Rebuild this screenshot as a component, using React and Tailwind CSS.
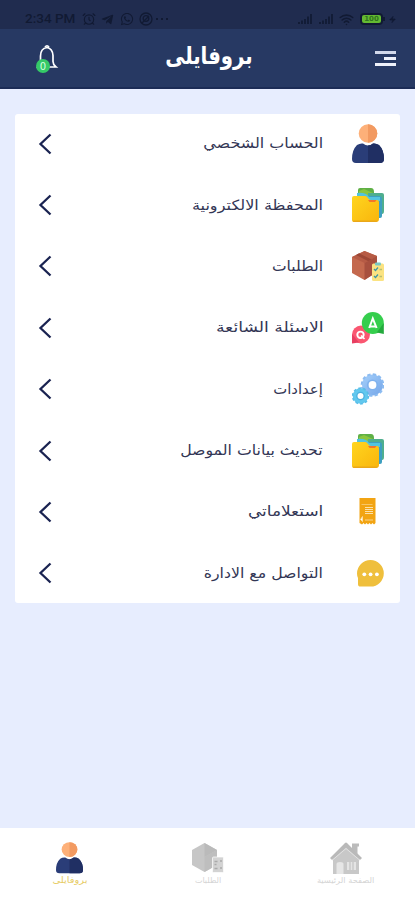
import React from "react";
import { AlarmClock, Wifi, Zap } from "lucide-react";
import { FaTelegramPlane, FaWhatsapp } from "react-icons/fa";

const UserIcon = ({ className }) => (
  <svg viewBox="0 0 32 40" preserveAspectRatio="none" className={className}>
    <path d="M5 21q3-2 6-1.500q5 4 10 0q3-.5 6 1.500q5 5 5 14q0 4-4 4H4q-4 0-4-4q0-9 5-14z" fill="#2a3d78" />
    <path d="M16 21.500q3 0 5-2q3-.5 6 1.500q5 5 5 14q0 4-4 4H16z" fill="#202f63" />
    <circle cx="16" cy="9.500" r="9.300" fill="#fdb079" />
    <path d="M16 .2a9.300 9.300 0 0 1 0 18.600z" fill="#f29a61" />
  </svg>
);

const FoldersIcon = ({ className }) => (
  <svg viewBox="0 0 32 34" className={className}>
    <defs>
      <linearGradient id="folder" x1="0" y1="0" x2="1" y2="1">
        <stop offset="0" stopColor="#ffd51f" />
        <stop offset="1" stopColor="#f9b50c" />
      </linearGradient>
    </defs>
    <path d="M6 2q0-2 2-2h11q3 0 3 4v8H6z" fill="#5fb046" />
    <path d="M7 3l5-2 9 4v4H7z" fill="#8bc63f" />
    <path d="M16 5h14q2 0 2 2v16q0 3-2 3H16z" fill="#4fae8e" />
    <path d="M14 8h13q3 0 3 3v17q0 2-2 2H14z" fill="#3d9fc0" />
    <path d="M5 5q9-1 12 4h11v4H5z" fill="#52c4df" />
    <path d="M0 10q0-2 2-2h11q2 0 3 2 1 2 3 2h6q2 0 2 2v17q0 3-3 3H2q-2 0-2-2z" fill="url(#folder)" />
    <path d="M16 12h8.500l-1.500 2h-5.500z" fill="#f2762a" />
    <path d="M.5 32.500h25.500q-1 1.500-3 1.500H2q-1 0-1.500-1.500z" fill="#eaa719" />
  </svg>
);

const BoxIcon = ({ className }) => (
  <svg viewBox="0 0 32 30" className={className}>
    <path d="M12.500 0L25 5v16L12.500 29 0 22V6z" fill="#c4694e" />
    <path d="M12.500 0L25 5 12.500 12 0 6z" fill="#b65b45" />
    <path d="M7 2.300l12 6v3.500l-3 1V10L4 4z" fill="#9c4736" />
    <path d="M12.500 12L25 5v16l-12.500 8z" fill="#a8503e" />
    <rect x="20" y="12.500" width="12" height="17.500" rx="1.500" fill="#fbe382" />
    <rect x="23" y="11.500" width="6" height="3" rx="1" fill="#79c9c4" />
    <path d="M22 18l1.500 1.500 2.500-3M22 25l1.500 1.500 2.500-3" fill="none" stroke="#3f97a5" strokeWidth="1.300" />
    <path d="M27.500 18.500h2.500M27.500 25.500h2.500" stroke="#b9bf70" strokeWidth="1.300" />
  </svg>
);

const FaqIcon = ({ className }) => (
  <svg viewBox="0 0 32 32" className={className}>
    <circle cx="9" cy="22.500" r="9" fill="#fa5771" />
    <path d="M0 22v9.500l7-1z" fill="#e83e61" />
    <circle cx="8.500" cy="22.800" r="3.200" fill="none" stroke="#fff" strokeWidth="1.900" />
    <path d="M9 23.500l3.500 3.500" stroke="#fff" strokeWidth="1.700" />
    <circle cx="20.800" cy="11" r="11" fill="#35ce4d" />
    <path d="M31.800 11v11l-7-1.500z" fill="#24aa3d" />
    <path d="M17.200 16L20.800 6.500 24.600 16M18 14.500h6" fill="none" stroke="#fff" strokeWidth="2" />
  </svg>
);

const GearsIcon = ({ className }) => (
  <svg viewBox="0 0 32 32" className={className}>
    <defs>
      <linearGradient id="gear" x1="0" y1="0" x2="1" y2="1">
        <stop offset="0" stopColor="#a5d0fb" />
        <stop offset="1" stopColor="#74a5e8" />
      </linearGradient>
    </defs>
    <circle cx="20.500" cy="12" r="10.500" fill="url(#gear)" />
    <circle cx="20.500" cy="12" r="10.800" fill="none" stroke="#8bbbf1" strokeWidth="2" strokeDasharray="3.400 2.250" />
    <circle cx="20.500" cy="12" r="5.600" fill="#7fb2ee" />
    <circle cx="20.500" cy="12" r="3.900" fill="#fff" />
    <circle cx="8.500" cy="23" r="7.800" fill="#62c8ee" />
    <circle cx="8.500" cy="23" r="7.900" fill="none" stroke="#58bde8" strokeWidth="1.600" strokeDasharray="2.700 2.260" />
    <circle cx="8.500" cy="23" r="4.300" fill="#4bb0e0" />
    <circle cx="8.500" cy="23" r="3" fill="#fff" />
  </svg>
);

const ReceiptIcon = ({ className }) => (
  <svg viewBox="0 0 17 27" className={className}>
    <path d="M.5 0h16v25l-1.500 1.500-1.500-1.500-1.500 1.500-1.500-1.500L9 26.500 7.500 25 6 26.500 4.500 25 3 26.500.5 25z" fill="#f2a413" />
    <path d="M2.500 6.500h11" stroke="#f9cf7d" strokeWidth=".8" />
    <path d="M6 9.500h8M6 11.500h8M6 13.500h8M6 15.500h8" stroke="#fbe1ae" strokeWidth="1" />
    <path d="M1.500 21.500l2-3v5zM6 22h8" fill="#fff" stroke="#fbe1ae" strokeWidth=".8" />
  </svg>
);

const ChatIcon = ({ className }) => (
  <svg viewBox="0 0 27 27" className={className}>
    <path d="M13.500 0a13.300 13.300 0 1 1 0 26.600H3.500Q1 26.600 1 24V18Q0 16 0 13.500A13.500 13.500 0 0 1 13.500 0z" fill="#efbf3c" />
    <circle cx="7.300" cy="14.300" r="1.900" fill="#fff" />
    <circle cx="13.600" cy="14.300" r="1.900" fill="#fff" />
    <circle cx="19.900" cy="14.300" r="1.900" fill="#fff" />
  </svg>
);

const HomeIcon = ({ className }) => (
  <svg viewBox="0 0 32 32" className={className}>
    <path d="M22 1.500h7v3h-1.500V12L22 7z" fill="#bbb" />
    <path d="M3 15L16 4l13 11v17H3z" fill="#c8c8c8" />
    <path d="M0 16L15 1q1-1 2 0l15 15-2 2L16 5.500 2 18z" fill="#b9b9b9" />
    <path d="M2.500 18L16 6.500 29.500 18" fill="none" stroke="#e2e2e2" />
    <path d="M6.500 32V22q0-2 3.500-2t3.500 2v10z" fill="#e6e6e6" />
    <rect x="17" y="20" width="9" height="8" fill="#e4e4e4" />
    <path d="M20 20v8M23 20v8" stroke="#bcbcbc" />
  </svg>
);

const OrdersIcon = ({ className }) => (
  <svg viewBox="0 0 32 30" className={className}>
    <path d="M12.500 0L25 7v15l-12.500 7L0 22V7z" fill="#c6c6c6" />
    <path d="M12.500 0L25 7l-12.500 7z" fill="#bababa" />
    <path d="M12.500 14L25 7v15l-12.500 7z" fill="#bebebe" />
    <rect x="20.500" y="14" width="11" height="15.500" rx="1" fill="#d3d3d3" stroke="#fff" strokeWidth=".7" />
    <path d="M22.500 18.500h3M22.500 21.500h2M22.500 25.500h3M28 18h2M28 25h2" stroke="#aaa" strokeWidth="1.300" />
  </svg>
);

const Signal = () => (
  <svg viewBox="0 0 14 10" className="h-[10px] w-[14px]">
    <path d="M1 10V8M4 10V6.500M7 10V5M10 10V2.500M13 10V0" stroke="#111a33" strokeWidth="1.700" />
  </svg>
);

const menuItems = [
  { label: "الحساب الشخصي", icon: UserIcon, size: "h-10 w-8", stretch: "scale-x-[1.14]" },
  { label: "المحفظة الالكترونية", icon: FoldersIcon, size: "h-[34px] w-8", stretch: "scale-x-[1.15]" },
  { label: "الطلبات", icon: BoxIcon, size: "h-[30px] w-8", stretch: "scale-x-[1.11]" },
  { label: "الاسئلة الشائعة", icon: FaqIcon, size: "h-8 w-8", stretch: "scale-x-[1.23]" },
  { label: "إعدادات", icon: GearsIcon, size: "h-8 w-8", stretch: "scale-x-[1.06]" },
  { label: "تحديث بيانات الموصل", icon: FoldersIcon, size: "h-[34px] w-8", stretch: "scale-x-[1.125]" },
  { label: "استعلاماتي", icon: ReceiptIcon, size: "h-[27px] w-[17px] mr-2", stretch: "scale-x-[1.21]" },
  { label: "التواصل مع الادارة", icon: ChatIcon, size: "h-[27px] w-[27px]", stretch: "scale-x-[1.125]" },
];

const StatusBar = () => (
  <div dir="ltr" className="flex h-[29px] items-center justify-between bg-[#202c4f] pt-[9px] pr-[19px] pl-[25px] text-[#111a33]">
    <div className="flex items-center">
      <span className="w-[51px] whitespace-nowrap font-[Roboto] text-[13.5px] leading-none font-medium">2:34 PM</span>
      <AlarmClock className="ml-[6px] h-[14px] w-[14px]" />
      <FaTelegramPlane className="ml-[5px] h-[13px] w-[13px]" />
      <FaWhatsapp className="ml-[6px] h-[14px] w-[14px]" />
      <svg viewBox="0 0 14 14" className="ml-[5px] h-[14px] w-[14px]" fill="none" stroke="#111a33" strokeWidth="1.300">
        <circle cx="7" cy="7" r="6" />
        <circle cx="7" cy="6.500" r="2.800" />
        <path d="M3 11L10 4" />
      </svg>
      <span className="ml-[3px] flex gap-[3px]">
        <i className="h-[2px] w-[2px] bg-[#111a33]" />
        <i className="h-[2px] w-[2px] bg-[#111a33]" />
        <i className="h-[2px] w-[2px] bg-[#111a33]" />
      </span>
    </div>
    <div className="flex items-center">
      <Signal />
      <span className="w-[7px]" />
      <Signal />
      <Wifi className="ml-[6px] h-[15px] w-[15px]" strokeWidth={2.500} />
      <div className="ml-[6px] flex h-[12px] w-[23px] items-center justify-center rounded-[4px] border-2 border-[#111a33] bg-[#64ba32] text-[7px] leading-none font-bold text-[#30751e]">
        100
      </div>
      <span className="h-[4px] w-[2px] bg-[#111a33]" />
      <Zap className="ml-[4px] h-[9px] w-[7px]" fill="#111a33" />
    </div>
  </div>
);

const Header = () => (
  <header dir="ltr" className="grid h-[60px] grid-cols-3 items-center border-b-2 border-[#1c2c56] bg-[#273963] pr-[19px] pl-[36px]">
    <div className="relative h-7 w-6">
      <svg viewBox="0 0 24 28" className="h-7 w-6" fill="none" stroke="#fff" strokeWidth="1.700">
        <path d="M11 3.500q5.500 1 6 8v6q0 3 3 5.500H2q2-2 2.500-5v-6q0-7.500 6.500-8.500zM9 3q2-2.500 4 0" />
      </svg>
      <span className="absolute bottom-[-1px] left-0 flex h-[14px] w-[14px] items-center justify-center rounded-full bg-[#35c967] text-[10px] text-[#d6ffe2]">
        0
      </span>
    </div>
    <h1 className="-mt-1 scale-x-[.82] justify-self-center whitespace-nowrap pr-[18px] text-[24px] leading-none font-bold text-white">بروفايلى</h1>
    <div className="flex flex-col items-end justify-self-end gap-[3px] pt-[1px]">
      <span className="h-[3px] w-[21px] bg-[#d1d8ea]" />
      <span className="h-[3px] w-[12px] bg-[#eef1fa]" />
      <span className="h-[3px] w-[21px] bg-[#eef1fa]" />
    </div>
  </header>
);

const MenuRow = ({ item }) => {
  const Icon = item.icon;
  return (
    <button className="flex flex-1 items-center pr-4 pb-[2px] pl-[23px]">
      <span className="flex w-8 shrink-0 justify-start">
        <Icon className={item.size} />
      </span>
      <span className={`mr-[29px] mb-[1px] origin-right whitespace-nowrap text-[14px] leading-6 text-[#333655] ${item.stretch}`}>
        {item.label}
      </span>
      <svg viewBox="0 0 14 22" className="mr-auto h-[22px] w-[14px]" fill="none" stroke="#1a2351" strokeWidth="2.300">
        <path d="M12.500 1.500L2.500 11l10 9.500" />
      </svg>
    </button>
  );
};

const BottomNav = () => (
  <nav className="flex h-[72px] bg-white">
    <div className="flex w-[138px] flex-col items-center pt-[14px]">
      <HomeIcon className="h-8 w-8" />
      <span className="mt-[1px] scale-x-[1.04] whitespace-nowrap text-[8px] leading-[12px] text-[#d5d5d5]">الصفحة الرئيسية</span>
    </div>
    <div className="flex w-[138px] flex-col items-center pt-[15px]">
      <OrdersIcon className="h-[30px] w-8" />
      <span className="mt-[2px] text-[8px] leading-[12px] text-[#d5d5d5]">الطلبات</span>
    </div>
    <div className="flex w-[139px] flex-col items-center pt-[14px]">
      <UserIcon className="h-8 w-[27px]" />
      <span className="scale-x-[1.1] text-[9px] leading-[12px] text-[#e7cc65]">بروفايلى</span>
    </div>
  </nav>
);

const App = () => {
  return (
    <div dir="rtl" className="flex h-[900px] w-[415px] flex-col overflow-hidden bg-[#e7edfe] font-['DejaVu_Sans',sans-serif]">
      <StatusBar />
      <Header />
      <main className="flex-1 px-[15px] pt-[25px]">
        <div className="h-[489px] rounded-[3px] bg-white">
          <div className="-mb-[2px] flex h-[491px] flex-col">
            {menuItems.map((item) => (
              <MenuRow key={item.label} item={item} />
            ))}
          </div>
        </div>
      </main>
      <BottomNav />
    </div>
  );
};

export default App;
